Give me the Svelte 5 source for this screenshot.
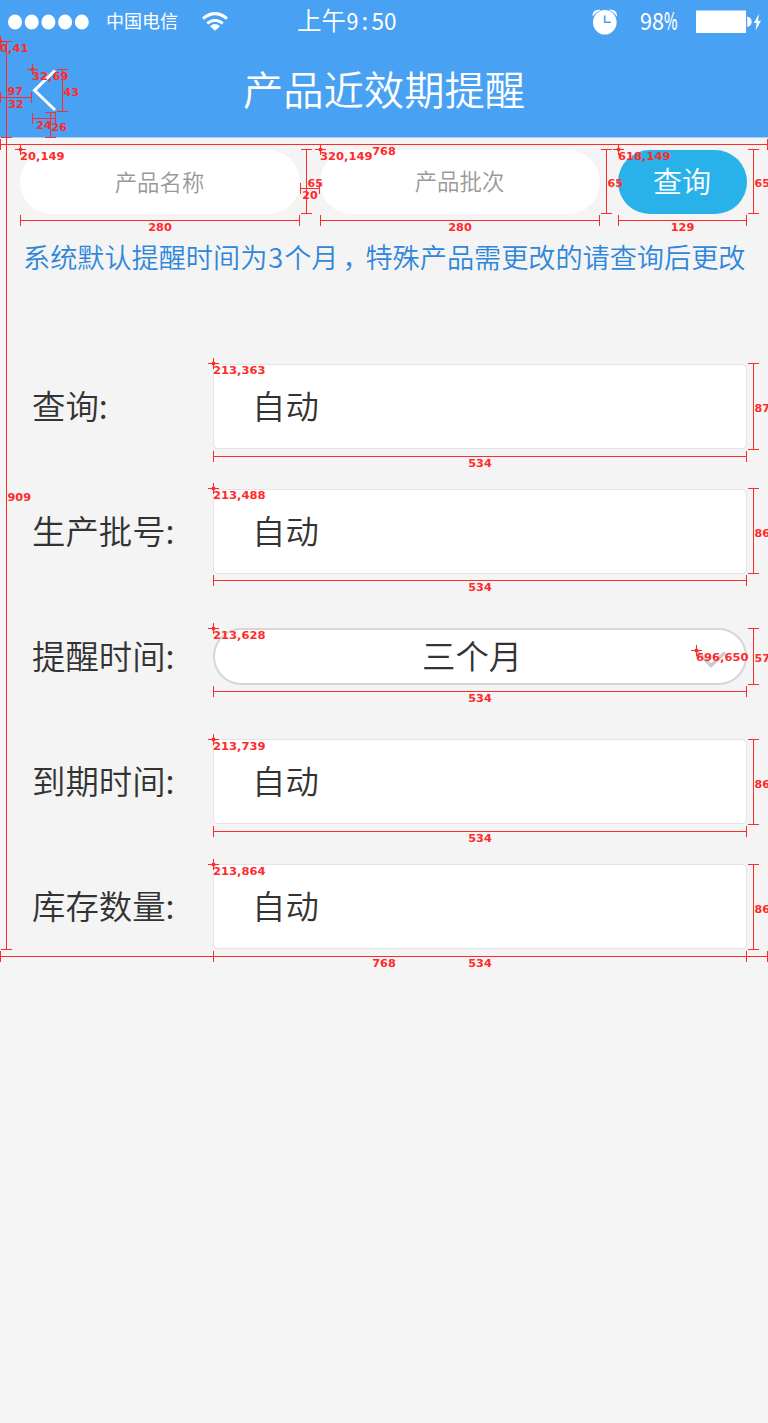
<script>
  const fields = [
    { label: '查询:', value: '自动' },
    { label: '生产批号:', value: '自动' },
    { label: '提醒时间:', value: '三个月', select: true },
    { label: '到期时间:', value: '自动' },
    { label: '库存数量:', value: '自动' }
  ];

  // Horizontal dimension lines: [x1, x2, y, label]
  const horizontal = [
    [0, 767, 144, '768'],
    [0, 31, 97, '32'],
    [32, 55, 118, '24'],
    [20, 299, 220, '280'],
    [300, 319, 188, '20'],
    [320, 599, 220, '280'],
    [618, 746, 220, '129'],
    [213, 746, 456, '534'],
    [213, 746, 580, '534'],
    [213, 746, 691, '534'],
    [213, 746, 831, '534'],
    [213, 746, 956, '534'],
    [0, 767, 956, '768']
  ];

  // Vertical dimension lines: [x, y1, y2, label]
  const vertical = [
    [6, 41, 137, '97'],
    [6, 41, 949, '909'],
    [62, 69, 111, '43'],
    [50, 112, 137, '26'],
    [306, 149, 213, '65'],
    [606, 149, 213, '65'],
    [753, 149, 213, '65'],
    [753, 363, 449, '87'],
    [753, 488, 573, '86'],
    [753, 628, 684, '57'],
    [753, 739, 824, '86'],
    [753, 864, 949, '86']
  ];

  const points = [
    [0, 41], [32, 69], [20, 149], [320, 149], [618, 149], [213, 363],
    [213, 488], [213, 628], [696, 650], [213, 739], [213, 864]
  ];

  const textWidth = (s) => [...s].reduce((w, c) => w + (c === ',' ? 5 : 8), 0) - 0.5;
</script>

<div class="screen">
  <header>
    <div class="status">
      <svg class="signal" width="82" height="16" viewBox="0 0 82 16">
        {#each [7, 23.7, 40.4, 57.1, 73.8] as cx}
          <ellipse {cx} cy="8" rx="7" ry="7.6" />
        {/each}
      </svg>
      <span class="carrier">中国电信</span>
      <svg class="wifi" width="26" height="19" viewBox="0 0 26 19">
        <path d="M1 6.6Q13-3.4 25 6.6" />
        <path d="M5.2 11.4Q13 5 20.8 11.4" />
        <path class="solid" d="M8 14.200Q13 10 18 14.200L13 18.800Z" />
      </svg>
      <div class="time">
        <span>上午</span>
        <svg width="52" height="43" viewBox="0 0 52 43">
          <text x="0.500" y="29.500" textLength="12" lengthAdjust="spacingAndGlyphs">9</text>
          <text x="15.500" y="29.500">:</text>
          <text x="25.500" y="29.500" textLength="25" lengthAdjust="spacingAndGlyphs">50</text>
        </svg>
      </div>
      <svg class="alarm" width="26" height="26" viewBox="0 0 26 26">
        <path class="solid" d="M.8 7.5C-.2 3 3.5-.2 9 .9Q3.500 2.900.8 7.500ZM24.800 7.500C25.800 3 22.100-.2 16.600.9Q22.100 2.900 24.800 7.500Z" />
        <ellipse cx="12.800" cy="13.200" rx="11.800" ry="12.300" />
        <path class="hands" d="M12.700 6.400V13.300H19" />
      </svg>
      <svg class="percent" width="40" height="43" viewBox="0 0 40 43">
        <text x="0" y="30" textLength="24" lengthAdjust="spacingAndGlyphs">98</text>
        <text class="sign" x="24" y="30" textLength="13.500" lengthAdjust="spacingAndGlyphs">%</text>
      </svg>
      <svg class="battery" width="66" height="24" viewBox="0 0 66 24">
        <path d="M0 .5H50V23H0ZM51.200 6.500Q55.600 7.500 55.600 11.800T51.200 17Z" />
        <path d="M62.800 4L57.800 13H60.600L59.600 20.500L65 10.800H62Z" />
      </svg>
    </div>
    <div class="bar">
      <svg class="back" width="26" height="44" viewBox="0 0 26 44">
        <path d="M23 2.500L2.500 22.300L23 42" />
      </svg>
      <h1>产品近效期提醒</h1>
    </div>
  </header>

  <div class="search">
    <div class="pill">产品名称</div>
    <div class="pill second">产品批次</div>
    <button type="button">查询</button>
  </div>

  <p class="notice">系统默认提醒时间为<span class="digit">3</span>个月<span class="comma">，</span>特殊产品需更改的请查询后更改</p>

  <div class="form">
    {#each fields as f}
      <div class="row" class:pick={f.select}>
        <span class="label">{f.label}</span>
        <div class="control">
          <span>{f.value}</span>
          {#if f.select}
            <svg class="arrow" width="32" height="18" viewBox="0 0 32 18">
              <path d="M2 1.500L16 15.500L30 2.500" />
            </svg>
          {/if}
        </div>
      </div>
    {/each}
  </div>

  <svg class="marks" width="768" height="1423" viewBox="0 0 768 1423">
    {#each horizontal as [x1, x2, y, t]}
      <path d="M{x1} {y + 0.5}H{x2 + 1}M{x1 + 0.5} {y - 5}v11M{x2 + 0.5} {y - 5}v11" />
      <text x={(x1 + x2 + 1) / 2 - textWidth(t) / 2} y={y + 11} textLength={textWidth(t)} lengthAdjust="spacingAndGlyphs">{t}</text>
    {/each}
    {#each vertical as [x, y1, y2, t]}
      <path d="M{x + 0.5} {y1}V{y2 + 1}M{x - 5} {y1 + 0.5}h11M{x - 5} {y2 + 0.5}h11" />
      <text x={x + 1.500} y={Math.round((y1 + y2) / 2) + 6} textLength={textWidth(t)} lengthAdjust="spacingAndGlyphs">{t}</text>
    {/each}
    {#each points as [x, y]}
      <path d="M{x - 5} {y + 0.5}h11M{x + 0.5} {y - 5}v11" />
      <circle cx={x + 0.5} cy={y + 0.5} r="2" />
      <text {x} y={y + 11} textLength={textWidth(`${x},${y}`)} lengthAdjust="spacingAndGlyphs">{x},{y}</text>
    {/each}
  </svg>
</div>

<style>
  :global(body) {
    margin: 0;
    background: #f5f5f5;
  }
  .screen {
    position: relative;
    width: 768px;
    height: 1423px;
    overflow: hidden;
    background: linear-gradient(#f4f4f4 957px, #f5f5f5 957px);
    font-family: 'Noto Sans CJK SC', sans-serif;
    font-weight: 350;
    color: #333;
  }
  svg {
    display: block;
    flex: none;
  }
  header {
    height: 137px;
    background: #49a1f3;
    border-bottom: 1px solid #a5cdf3;
    color: #fff;
  }
  .status {
    display: flex;
    align-items: center;
    height: 43px;
    fill: #fff;
    font-weight: 400;
  }
  .signal {
    margin-left: 8px;
  }
  .carrier {
    width: 72px;
    margin-left: 16px;
    padding-bottom: 3px;
    font-size: 18px;
    line-height: 26px;
    white-space: nowrap;
  }
  .wifi {
    margin-left: 24px;
    fill: none;
    stroke: #fff;
    stroke-width: 3;
  }
  .solid {
    fill: #fff;
    stroke: none;
  }
  .time {
    display: flex;
    align-items: center;
    width: 102px;
    margin-left: 69px;
    font-size: 24.500px;
    line-height: 38px;
  }
  .time span {
    padding-bottom: 3px;
    font-weight: 350;
  }
  .time svg {
    font-size: 24px;
    font-weight: 400;
  }
  .alarm {
    margin-left: 193px;
  }
  .hands {
    fill: none;
    stroke: #49a1f3;
    stroke-width: 1.600;
  }
  .percent {
    margin-left: 22px;
    font-size: 24px;
  }
  .sign {
    font-weight: 500;
  }
  .battery {
    margin-left: 16px;
  }
  .bar {
    display: grid;
    grid-template-columns: 32px 1fr 32px;
    align-items: center;
    height: 94px;
  }
  .back {
    grid-column: 2;
    grid-row: 1;
    fill: none;
    stroke: #fff;
    stroke-width: 3;
  }
  h1 {
    grid-column: 1 / 4;
    grid-row: 1;
    margin: 0;
    padding-bottom: 5px;
    font-size: 40.300px;
    line-height: 58px;
    font-weight: 350;
    text-align: center;
  }
  .search {
    display: flex;
    padding: 12px 20px 0;
  }
  .pill,
  button {
    box-sizing: border-box;
    height: 64px;
    border: 0;
    border-radius: 32px;
    line-height: 62px;
    text-align: center;
  }
  .pill {
    width: 280px;
    padding-right: 1px;
    background: #fff;
    color: #999;
    font-size: 22.400px;
  }
  .second {
    margin-left: 20px;
    line-height: 61px;
  }
  button {
    width: 129px;
    margin-left: 18px;
    padding: 0 1px 4px 0;
    background: #29b1ea;
    color: #fff;
    font-family: inherit;
    font-weight: inherit;
    font-size: 29px;
    line-height: 60px;
  }
  .notice {
    margin: 24px 0 0 23px;
    font-size: 27.150px;
    line-height: 37px;
    color: #2f87da;
    white-space: nowrap;
  }
  .digit {
    padding: 0 1px;
  }
  .comma {
    display: inline-block;
    width: 27px;
    line-height: 30px;
    text-indent: 4px;
  }
  .form {
    display: flex;
    flex-direction: column;
    gap: 40px;
    padding: 89px 21px 0 32px;
    font-size: 33.400px;
  }
  .row {
    display: flex;
    align-items: center;
    height: 85px;
  }
  .label {
    width: 181px;
    padding-bottom: 4px;
    white-space: nowrap;
  }
  .control {
    box-sizing: border-box;
    display: flex;
    align-items: center;
    width: 534px;
    height: 100%;
    padding-left: 38px;
    background: #fff;
    border: 1.500px solid #e4e4e4;
    border-radius: 5px;
  }
  .control span {
    padding-bottom: 5px;
  }
  .pick {
    height: 57px;
    margin: 14px 0;
  }
  .pick .control {
    display: grid;
    grid-template-columns: 207px 1fr 34px 16px;
    padding: 0;
    border: 2px solid #d6d6d6;
    border-radius: 29px;
  }
  .pick .control span {
    grid-column: 2;
    padding-bottom: 3px;
    line-height: 48px;
  }
  .arrow {
    margin-top: 4px;
    fill: none;
    stroke: #ccc;
    stroke-width: 3.500;
  }
  .marks {
    position: absolute;
    top: 0;
    left: 0;
    fill: #ff2a2a;
    font: bold 11px 'DejaVu Sans', sans-serif;
  }
  .marks path {
    fill: none;
    stroke: #ff2a2a;
    stroke-width: 1;
    shape-rendering: crispEdges;
  }
</style>
